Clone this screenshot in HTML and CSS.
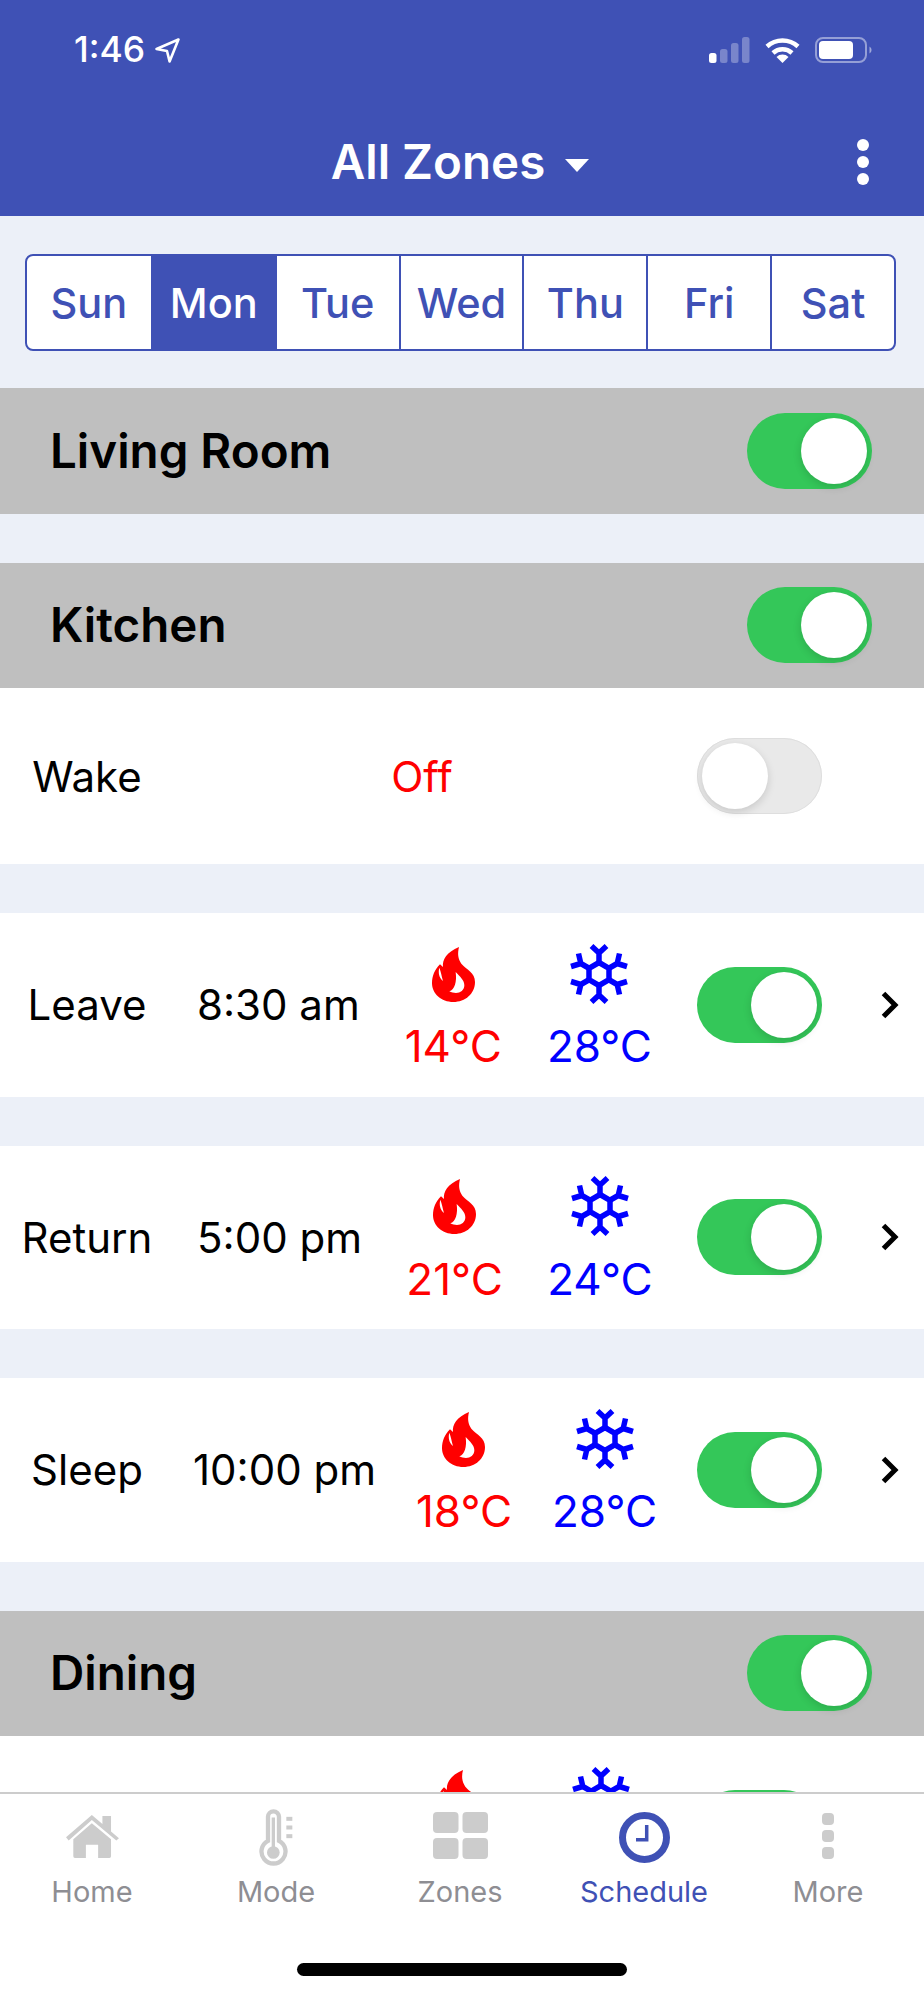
FILE: index.html
```html
<!DOCTYPE html>
<html lang="en">
<head>
<meta charset="utf-8">
<title>Schedule</title>
<link rel="stylesheet" href="styles.css">
</head>
<body>
<svg class="sprite" aria-hidden="true">
  <symbol id="flame" viewBox="0 0 129 165">
    <path fill="#f00" fill-rule="evenodd" d="M81 0C45 15 30 38 33 60L24 52C8 68 0 88 0 108C0 140 28 165 64 165C100 165 129 140 129 105C129 75 105 70 88 50C78 35 76 20 81 0ZM22 62C18 76 21 92 33 102C29 88 27 75 22 62ZM71 75C85 90 97 100 97 115C97 130 85 138 72 138C65 138 58 137 52 133C68 128 75 105 71 75Z"/>
  </symbol>
  <symbol id="snow" viewBox="-29 -30 58 60">
    <g fill="none" stroke="#00f" stroke-width="5.5">
      <path d="M0 -11.5L10 -5.75V5.75L0 11.5L-10 5.75V-5.75Z"/>
      <g id="arm"><path d="M0 -11V-24M-7.5 -28L0 -21L7.5 -28"/></g>
      <use href="#arm" transform="rotate(60)"/>
      <use href="#arm" transform="rotate(120)"/>
      <use href="#arm" transform="rotate(180)"/>
      <use href="#arm" transform="rotate(240)"/>
      <use href="#arm" transform="rotate(300)"/>
    </g>
  </symbol>
</svg>

<div class="page">
  <header class="appbar">
    <div class="status">
      <div class="status-left">
        <span class="clock-time">1:46</span>
        <svg class="loc" viewBox="0 0 24 24"><path d="M22.5 1.5L1.5 10.5L11.5 12.5L14 22.5Z" fill="none" stroke="#fff" stroke-width="2.5" stroke-linejoin="round"/></svg>
      </div>
      <div class="status-right">
        <svg class="signal" viewBox="0 0 41 26">
          <rect x="0" y="16" width="7.5" height="10" rx="2.5" fill="#fff"/>
          <rect x="11" y="12" width="7.5" height="14" rx="2.5" fill="#fff" opacity=".3"/>
          <rect x="22" y="6" width="7.5" height="20" rx="2.5" fill="#fff" opacity=".3"/>
          <rect x="33" y="0" width="7.5" height="26" rx="2.5" fill="#fff" opacity=".3"/>
        </svg>
        <svg class="wifi" viewBox="0 0 35 26">
          <path d="M2 9.5A23 23 0 0 1 33 9.5M8 16A14 14 0 0 1 27 16" fill="none" stroke="#fff" stroke-width="4.5"/>
          <path d="M17.5 26L11.5 20A8.5 8.5 0 0 1 23.5 20Z" fill="#fff"/>
        </svg>
        <svg class="battery" viewBox="0 0 57 26">
          <rect x="1" y="1" width="50" height="24" rx="7" fill="none" stroke="#fff" stroke-opacity=".45" stroke-width="2"/>
          <rect x="4" y="4" width="34" height="18" rx="4" fill="#fff"/>
          <path d="M54.5 9.5A4 4 0 0 1 54.5 16.5Z" fill="#fff" fill-opacity=".5"/>
        </svg>
      </div>
    </div>
    <div class="titlebar">
      <span></span>
      <div class="title">
        <span>All Zones</span>
        <svg class="caret" viewBox="0 0 24 13"><path d="M0 0H24L12 13Z" fill="#fff"/></svg>
      </div>
      <svg class="kebab" viewBox="0 0 12 46">
        <circle cx="6" cy="6" r="6" fill="#fff"/><circle cx="6" cy="23" r="6" fill="#fff"/><circle cx="6" cy="40" r="6" fill="#fff"/>
      </svg>
    </div>
  </header>

  <main class="schedule">
    <div class="days">
      <div class="day">Sun</div>
      <div class="day day-active">Mon</div>
      <div class="day">Tue</div>
      <div class="day">Wed</div>
      <div class="day">Thu</div>
      <div class="day">Fri</div>
      <div class="day">Sat</div>
    </div>

    <section class="zone">
      <div class="zone-head"><h2 class="zone-name">Living Room</h2><div class="toggle toggle-on"><span class="thumb"></span></div></div>
    </section>

    <section class="zone">
      <div class="zone-head"><h2 class="zone-name">Kitchen</h2><div class="toggle toggle-on"><span class="thumb"></span></div></div>
      <div class="row row-off">
        <div class="period">Wake</div>
        <div class="off">Off</div>
        <div class="toggle toggle-off"><span class="thumb"></span></div>
        <span class="row-end"></span>
      </div>
      <div class="row">
        <div class="period">Leave</div>
        <div class="time">8:30 am</div>
        <div class="temps">
          <div class="temp heat"><svg class="ico-flame"><use href="#flame"/></svg><span>14°C</span></div>
          <div class="temp cool"><svg class="ico-snow"><use href="#snow"/></svg><span>28°C</span></div>
        </div>
        <div class="toggle toggle-on"><span class="thumb"></span></div>
        <span class="row-end"><svg class="chev" viewBox="0 0 20 30"><path d="M3.5 3.5L15 15L3.5 26.5" fill="none" stroke="#000" stroke-width="5"/></svg></span>
      </div>
      <div class="row">
        <div class="period">Return</div>
        <div class="time">5:00 pm</div>
        <div class="temps">
          <div class="temp heat"><svg class="ico-flame"><use href="#flame"/></svg><span>21°C</span></div>
          <div class="temp cool"><svg class="ico-snow"><use href="#snow"/></svg><span>24°C</span></div>
        </div>
        <div class="toggle toggle-on"><span class="thumb"></span></div>
        <span class="row-end"><svg class="chev" viewBox="0 0 20 30"><path d="M3.5 3.5L15 15L3.5 26.5" fill="none" stroke="#000" stroke-width="5"/></svg></span>
      </div>
      <div class="row">
        <div class="period">Sleep</div>
        <div class="time time-long">10:00 pm</div>
        <div class="temps">
          <div class="temp heat"><svg class="ico-flame"><use href="#flame"/></svg><span>18°C</span></div>
          <div class="temp cool"><svg class="ico-snow"><use href="#snow"/></svg><span>28°C</span></div>
        </div>
        <div class="toggle toggle-on"><span class="thumb"></span></div>
        <span class="row-end"><svg class="chev" viewBox="0 0 20 30"><path d="M3.5 3.5L15 15L3.5 26.5" fill="none" stroke="#000" stroke-width="5"/></svg></span>
      </div>
    </section>

    <section class="zone">
      <div class="zone-head"><h2 class="zone-name">Dining</h2><div class="toggle toggle-on"><span class="thumb"></span></div></div>
      <div class="row row-cut">
        <div class="period"></div>
        <div class="time time-blank"></div>
        <div class="temps">
          <div class="temp heat"><svg class="ico-flame"><use href="#flame"/></svg></div>
          <div class="temp cool"><svg class="ico-snow"><use href="#snow"/></svg></div>
        </div>
        <div class="toggle toggle-on"><span class="thumb"></span></div>
        <span class="row-end"></span>
      </div>
    </section>
  </main>

  <nav class="tabbar">
    <div class="tabs">
      <div class="tab">
        <div class="tab-icon"><svg class="i-home" viewBox="50 45 160 133"><path fill="#ccc" d="M50 112L128 45L160 72V48H186V95L210 115L202 122L128 60L58 122ZM72 118L128 70L186 118V170Q186 175 181 175H147V135H110V175H77Q72 175 72 170Z"/></svg></div>
        <span class="tab-label">Home</span>
      </div>
      <div class="tab">
        <div class="tab-icon"><svg class="i-therm" viewBox="630 22 102 176"><path d="M657 120V48A16.5 16.5 0 0 1 690 48V120A36 36 0 1 1 657 120Z" fill="none" stroke="#ccc" stroke-width="13"/><rect x="668" y="50" width="10" height="90" fill="#ccc"/><circle cx="673" cy="155" r="19" fill="#ccc"/><rect x="712" y="48" width="18" height="12" fill="#ccc"/><rect x="712" y="74" width="18" height="12" fill="#ccc"/><rect x="712" y="100" width="18" height="12" fill="#ccc"/></svg></div>
        <span class="tab-label">Mode</span>
      </div>
      <div class="tab">
        <div class="tab-icon"><svg class="i-zones" viewBox="0 0 55 47"><rect width="25.5" height="21" rx="4" fill="#ccc"/><rect x="29.5" width="25.5" height="21" rx="4" fill="#ccc"/><rect y="26" width="25.5" height="21" rx="4" fill="#ccc"/><rect x="29.5" y="26" width="25.5" height="21" rx="4" fill="#ccc"/></svg></div>
        <span class="tab-label">Zones</span>
      </div>
      <div class="tab tab-active">
        <div class="tab-icon"><svg class="i-clock" viewBox="0 0 51 51"><circle cx="25.5" cy="25.5" r="22" fill="none" stroke="#3f51b5" stroke-width="7"/><path d="M27.7 13V27.7H17" fill="none" stroke="#3f51b5" stroke-width="3.5"/></svg></div>
        <span class="tab-label">Schedule</span>
      </div>
      <div class="tab">
        <div class="tab-icon"><svg class="i-more" viewBox="0 0 12 46"><rect width="12" height="12" rx="4" fill="#ccc"/><rect y="17" width="12" height="12" rx="4" fill="#ccc"/><rect y="34" width="12" height="12" rx="4" fill="#ccc"/></svg></div>
        <span class="tab-label">More</span>
      </div>
    </div>
    <div class="home-indicator"></div>
  </nav>
</div>
</body>
</html>
```

FILE: styles.css
```css
* { box-sizing: border-box; }

html, body {
  margin: 0;
  padding: 0;
}

body {
  font-family: Inter, "Liberation Sans", sans-serif;
  background: #ecf0f8;
  color: #000;
}

.sprite { display: none; }

.page {
  width: 924px;
  height: 2000px;
  display: flex;
  flex-direction: column;
  overflow: hidden;
}

/* App bar */
.appbar {
  flex: none;
  height: 216px;
  background: #3f51b5;
  color: #fff;
  padding-top: 30px;
}

.status {
  height: 40px;
  display: flex;
  align-items: center;
  justify-content: space-between;
  padding: 0 52px 0 74px;
}

.status-left {
  display: flex;
  align-items: center;
  gap: 10px;
}

.clock-time {
  font-size: 35.5px;
  font-weight: 500;
  line-height: 40px;
}

.loc { width: 25px; height: 25px; }

.status-right {
  display: flex;
  align-items: center;
  gap: 15px;
}

.signal { width: 41px; height: 26px; }
.wifi { width: 35px; height: 26px; }
.battery { width: 57px; height: 26px; }

.titlebar {
  margin-top: 62px;
  height: 60px;
  display: grid;
  grid-template-columns: 1fr auto 1fr;
  align-items: center;
}

.title {
  display: flex;
  align-items: center;
  gap: 20px;
  margin-right: 4px;
  font-size: 47.5px;
  font-weight: 600;
  line-height: 60px;
}

.caret { width: 24px; height: 13px; margin-top: 6px; }

.kebab {
  width: 12px;
  height: 46px;
  justify-self: end;
  margin-right: 55px;
}

/* Scrolling content */
.schedule {
  flex: 1;
  min-height: 0;
  overflow: hidden;
  padding-top: 38px;
}

.days {
  display: grid;
  grid-template-columns: repeat(7, 1fr);
  margin: 0 28px 37px 25px;
  height: 97px;
  border: 2px solid #3f51b5;
  border-radius: 8px;
  background: #fff;
  overflow: hidden;
}

.day {
  display: flex;
  align-items: center;
  justify-content: center;
  font-size: 41.5px;
  font-weight: 500;
  color: #3f51b5;
  border-left: 2px solid #3f51b5;
}

.day:first-child { border-left: 0; }

.day-active {
  background: #3f51b5;
  color: #fff;
}

.zone { margin-bottom: 49px; }

.zone-head {
  height: 125.5px;
  display: flex;
  align-items: center;
  justify-content: space-between;
  padding: 0 52px 0 50px;
  background: #bfbfbf;
}

.zone-name {
  margin: 0;
  font-size: 47.5px;
  font-weight: 600;
  line-height: 60px;
}

/* Toggles */
.toggle {
  flex: none;
  width: 125px;
  height: 76px;
  padding: 5px;
  display: flex;
  border-radius: 38px;
}

.toggle-on {
  background: #34c759;
  justify-content: flex-end;
}

.toggle-off {
  background: #e9e9e9;
  box-shadow: inset 0 0 0 1px #dedede;
  justify-content: flex-start;
}

.thumb {
  width: 66px;
  height: 66px;
  border-radius: 50%;
  background: #fff;
  box-shadow: 0 3px 8px rgba(0, 0, 0, .14);
}

/* Schedule rows */
.row {
  height: 183.5px;
  display: flex;
  align-items: center;
  background: #fff;
  margin-bottom: 49px;
  font-size: 42px;
}

.row:last-child { margin-bottom: 0; }

.row-off { height: 176px; }

.period {
  flex: none;
  width: 174px;
  text-align: center;
}

.time {
  flex: none;
  margin-left: 23px;
}

.time-long { margin-left: 19px; }

.time-blank { width: 164px; }

.off {
  flex: 1;
  margin-right: 27px;
  text-align: center;
  color: #f00;
}

.temps {
  flex: 1;
  display: flex;
  justify-content: space-evenly;
  align-items: flex-start;
  padding-top: 4px;
}

.temp {
  display: flex;
  flex-direction: column;
  align-items: center;
  min-width: 96px;
  line-height: 48px;
  font-size: 44px;
}

.heat { color: #f00; }
.cool { color: #00f; }

.ico-flame {
  width: 43px;
  height: 55px;
  margin-top: 3px;
  margin-bottom: 20.5px;
}

.ico-snow {
  width: 58px;
  height: 60px;
  margin-bottom: 18.5px;
}

.row-end {
  flex: none;
  width: 102px;
  display: flex;
  justify-content: flex-end;
  padding-right: 24px;
}

.chev { width: 20px; height: 30px; }

/* Keep the cut-off row's icons at the top of the row */
.row-cut { align-items: flex-start; }
.row-cut .temps { margin-top: 27px; }
.row-cut .toggle { margin-top: 54px; }

/* Tab bar */
.tabbar {
  flex: none;
  height: 208px;
  background: #fff;
  border-top: 2px solid #ccc;
  padding-top: 13px;
}

.tabs {
  display: flex;
  padding-right: 4px;
}

.tab {
  flex: 1;
  display: flex;
  flex-direction: column;
  align-items: center;
  color: #8e8e93;
}

.tab-active { color: #3f51b5; }

.tab-icon {
  height: 60px;
  display: flex;
  align-items: center;
  justify-content: center;
}

.i-home { width: 53px; height: 44px; }
.i-therm { width: 34px; height: 59px; }
.i-zones { width: 55px; height: 47px; margin-bottom: 3px; }
.i-clock { width: 51px; height: 51px; }
.i-more { width: 12px; height: 46px; margin-bottom: 3px; }

.tab-label {
  margin-top: 9px;
  font-size: 29px;
  line-height: 32px;
}

.home-indicator {
  width: 330px;
  height: 13px;
  margin: 55px 0 0 297px;
  border-radius: 7px;
  background: #000;
}
```
